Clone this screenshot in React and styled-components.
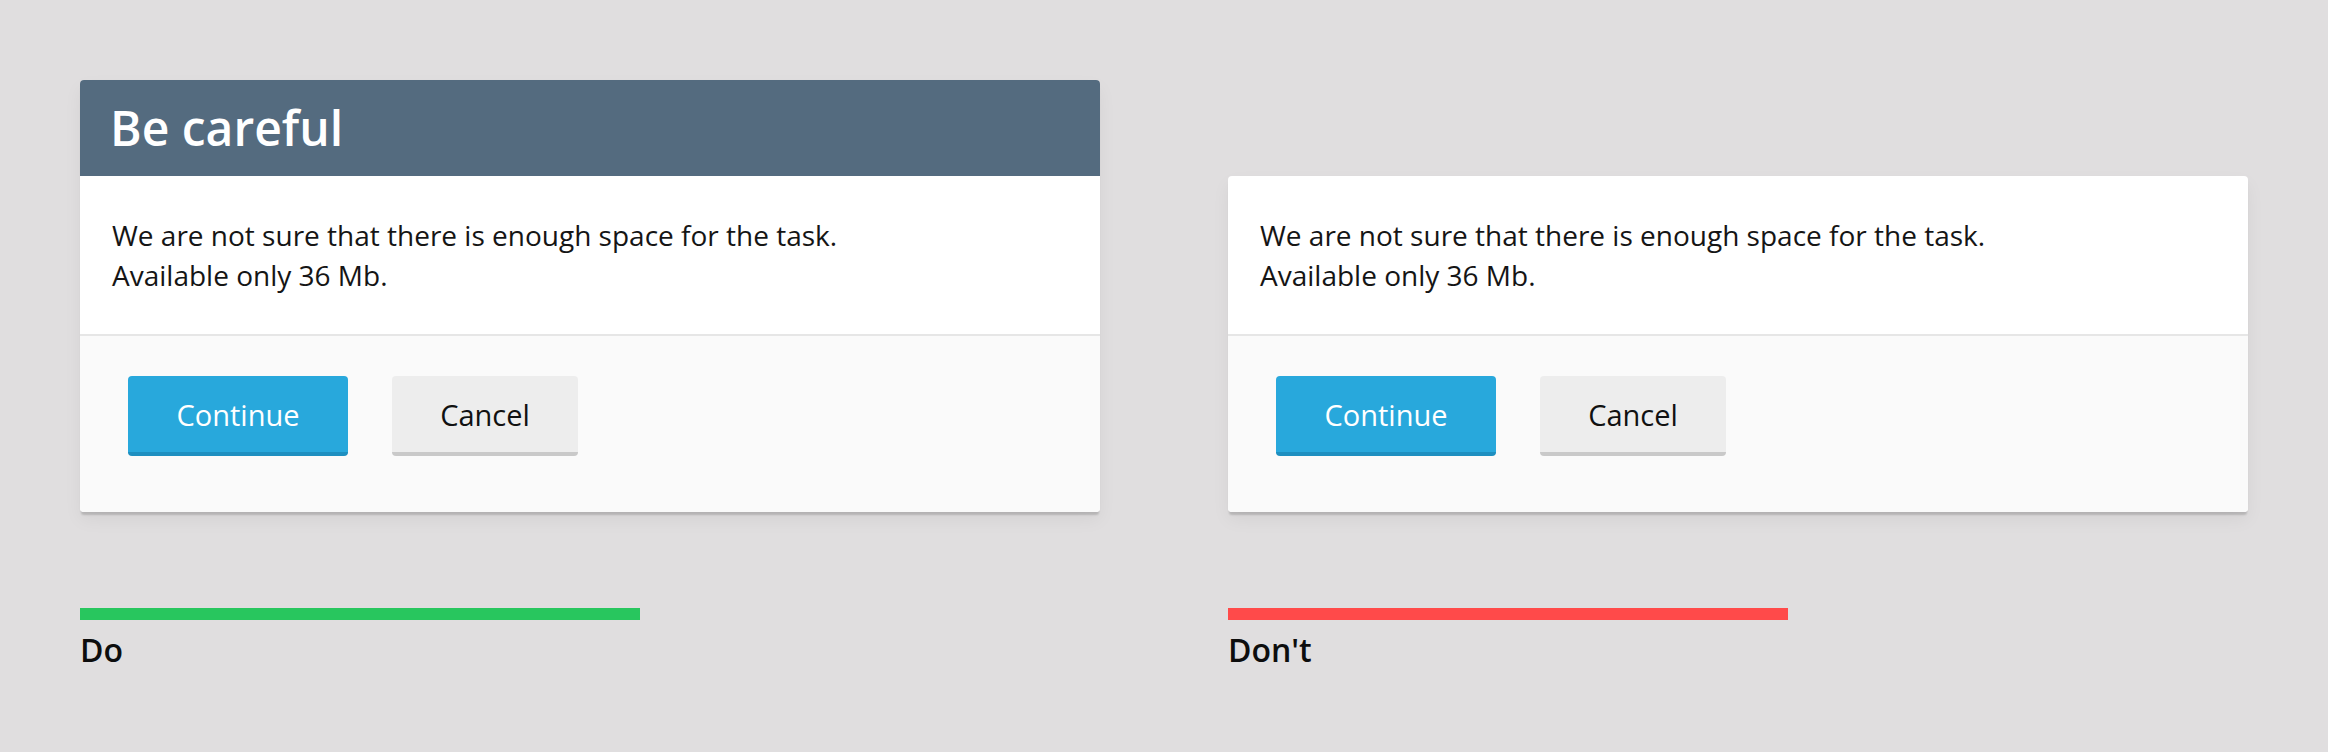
import React from "react";
import styled, { createGlobalStyle } from "styled-components";

const GlobalStyle = createGlobalStyle`
  html, body {
    margin: 0;
    padding: 0;
    background: #e0dedf;
  }
  body {
    font-family: "Open Sans", "Noto Sans", sans-serif;
    color: #151515;
  }
`;

const EXAMPLES = [
  { id: "do", title: "Be careful", label: "Do", color: "#28c65e" },
  { id: "dont", title: null, label: "Don't", color: "#ff4a4a" },
];

const Page = () => {
  return (
    <>
      <GlobalStyle />
      <Board>
        {EXAMPLES.map((item) => (
          <DialogCell key={item.id}>
            <Dialog>
              {item.title && <Header>{item.title}</Header>}
              <Body>
                We are not sure that there is enough space for the task.
                <br />
                Available only 36 Mb.
              </Body>
              <Footer>
                <Button $primary>Continue</Button>
                <Button>Cancel</Button>
              </Footer>
            </Dialog>
          </DialogCell>
        ))}
        {EXAMPLES.map((item) => (
          <Legend key={item.id + "-legend"}>
            <Bar $color={item.color} />
            <Label>{item.label}</Label>
          </Legend>
        ))}
      </Board>
    </>
  );
};

const Board = styled.div`
  display: grid;
  grid-template-columns: 1020px 1020px;
  column-gap: 128px;
  row-gap: 96px;
  padding: 80px 80px 0;
`;

const DialogCell = styled.div`
  align-self: end;
`;

const Dialog = styled.div`
  background: #ffffff;
  border-radius: 4px;
  overflow: hidden;
  box-shadow: 0 4px 2px -1px rgba(0, 0, 0, 0.16),
    0 8px 18px rgba(0, 0, 0, 0.05);
`;

const Header = styled.div`
  height: 96px;
  padding: 0 30px;
  background: #546b7f;
  color: #ffffff;
  font-size: 48px;
  font-weight: 600;
  line-height: 96px;
`;

const Body = styled.div`
  padding: 39px 32px;
  font-size: 28px;
  line-height: 40px;
  color: #151515;
`;

const Footer = styled.div`
  display: flex;
  gap: 44px;
  padding: 40px 48px 56px;
  background: #fafafa;
  border-top: 2px solid #e6e6e6;
`;

const Button = styled.button`
  box-sizing: border-box;
  height: 80px;
  width: ${(p) => (p.$primary ? "220px" : "186px")};
  padding: 2px 0 0;
  border: none;
  border-radius: 4px;
  border-bottom: 4px solid ${(p) => (p.$primary ? "#1e8fc0" : "#c9c9c9")};
  background: ${(p) => (p.$primary ? "#28a8dc" : "#ededed")};
  color: ${(p) => (p.$primary ? "#ffffff" : "#111111")};
  font-family: "Open Sans", sans-serif;
  font-size: 29px;
  line-height: 40px;
`;

const Legend = styled.div`
  display: flex;
  flex-direction: column;
`;

const Bar = styled.div`
  width: 560px;
  height: 12px;
  background: ${(p) => p.$color};
`;

const Label = styled.div`
  margin-top: 8px;
  font-size: 32px;
  font-weight: 600;
  color: #0d0d0d;
`;

export default Page;
